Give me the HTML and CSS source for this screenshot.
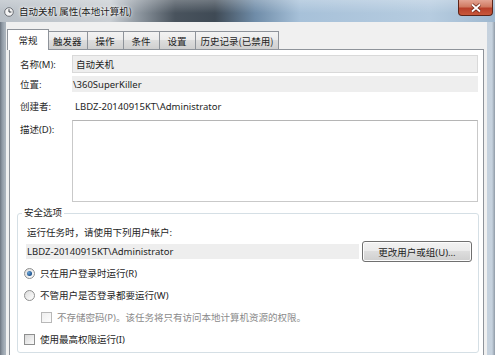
FILE: index.html
```html
<!DOCTYPE html>
<html lang="zh-CN">

<head>
    <meta charset="UTF-8">
    <title>自动关机 属性(本地计算机)</title>
    <link rel="stylesheet" href="styles.css">
</head>

<body>
    <div class="window">
        <div class="titlebar">
            <svg class="app-icon" width="10" height="10" viewBox="0 0 10 10">
                <circle cx="5" cy="5" r="4.3" fill="#f4f4f4" stroke="#6b6f75" stroke-width="1"/>
                <path d="M5 2.2V5H7.4" fill="none" stroke="#33383e" stroke-width="1"/>
            </svg>
            <span class="title">自动关机 属性(本地计算机)</span>
            <div class="close-btn">
                <svg width="12" height="10" viewBox="0 0 12 10">
                    <path d="M2 1.5L10 8.5M10 1.5L2 8.5" stroke="#6b2416" stroke-width="3.4"/>
                    <path d="M2 1.5L10 8.5M10 1.5L2 8.5" stroke="#ffffff" stroke-width="1.8"/>
                </svg>
            </div>
        </div>

        <div class="client">
            <div class="tabs">
                <div class="tab tab-active">常规</div>
                <div class="tab">触发器</div>
                <div class="tab">操作</div>
                <div class="tab">条件</div>
                <div class="tab">设置</div>
                <div class="tab">历史记录(已禁用)</div>
            </div>

            <div class="panel">
                <div class="info-grid">
                    <div class="label">名称(M):</div>
                    <div class="field field-box">自动关机</div>
                    <div class="label">位置:</div>
                    <div class="field field-fill">\360SuperKiller</div>
                    <div class="label">创建者:</div>
                    <div class="field field-text">LBDZ-20140915KT\Administrator</div>
                    <div class="label label-top">描述(D):</div>
                    <div class="memo"></div>
                </div>

                <fieldset class="group">
                    <legend>安全选项</legend>
                    <div class="hint">运行任务时，请使用下列用户帐户:</div>
                    <div class="account-row">
                        <div class="account">LBDZ-20140915KT\Administrator</div>
                        <button class="btn">更改用户或组(U)...</button>
                    </div>
                    <div class="options">
                        <div class="option"><span class="radio radio-on"></span>只在用户登录时运行(R)</div>
                        <div class="option"><span class="radio"></span>不管用户是否登录都要运行(W)</div>
                        <div class="option option-sub option-disabled"><span class="check"></span>不存储密码(P)。该任务将只有访问本地计算机资源的权限。</div>
                        <div class="option"><span class="check"></span>使用最高权限运行(I)</div>
                    </div>
                </fieldset>
            </div>
        </div>
    </div>
</body>

</html>
```

FILE: styles.css
```css
body {
    margin: 0;
    font-family: "Noto Sans", "Noto Sans CJK SC", sans-serif;
    font-size: 9.5px;
    color: #1e1e1e;
    overflow: hidden;
}

.window {
    width: 495px;
    height: 355px;
    display: flex;
    flex-direction: column;
    background: linear-gradient(to right, #6c7580 0, #8e98a3 2px, #aab3bc 5px, #b9c2cb 50%, #c6d2de calc(100% - 3px), #8f9aa6 100%);
}

.titlebar {
    height: 22px;
    display: flex;
    align-items: center;
    background:
        linear-gradient(to bottom, rgba(255, 255, 255, 0.25), rgba(255, 255, 255, 0) 60%),
        linear-gradient(to right, #b9c0c7 0, #c9ced3 110px, #8b949d 140px, #49535d 175px, #3f4a55 215px, #6f8ca8 255px, #a7c1d9 300px, #b6cce0 430px, #9fb8cf 100%);
}

.app-icon {
    margin-left: 4px;
    margin-top: 1px;
}

.title {
    margin-left: 5px;
    color: #1b1b1b;
    font-family: "Noto Sans CJK SC", sans-serif;
    text-shadow: 0 0 4px #ffffff, 0 0 2px #ffffff;
}

.close-btn {
    align-self: flex-start;
    margin-left: auto;
    margin-right: 2px;
    width: 35px;
    height: 16px;
    display: flex;
    align-items: center;
    justify-content: center;
    border: 1px solid #5d2418;
    border-top: none;
    border-radius: 0 0 4px 4px;
    box-sizing: border-box;
    background: linear-gradient(to bottom, #e3a493 0, #d07a62 45%, #b8402a 55%, #c9583b 100%);
}

.client {
    flex: 1;
    margin: 0 8px 0 6px;
    padding: 7px 3px 0 3px;
    background: #f0f0f0;
    display: flex;
    flex-direction: column;
}

.tabs {
    display: flex;
    align-items: flex-end;
    height: 20px;
    position: relative;
    z-index: 1;
}

.tab {
    height: 18px;
    min-width: 37px;
    padding: 0 5px;
    box-sizing: border-box;
    display: flex;
    align-items: center;
    justify-content: center;
    border: 1px solid #8e939a;
    border-bottom: none;
    margin-left: -1px;
    background: linear-gradient(to bottom, #f3f3f3 0, #ebebeb 45%, #dddddd 50%, #cfcfcf 100%);
    font-family: "Noto Sans CJK SC", sans-serif;
}

.tab-active {
    height: 21px;
    margin: 0 -2px -1px -2px;
    min-width: 42px;
    background: #ffffff;
    position: relative;
    z-index: 2;
}

.tab-active + .tab {
    margin-left: 0;
}

.panel {
    flex: 1;
    border: 1px solid #8e939a;
    border-bottom: none;
    background: #ffffff;
    padding: 5px 5px 0 10px;
}

.info-grid {
    display: grid;
    grid-template-columns: 52px 1fr;
    grid-template-rows: 18px 16px 22px 82px;
    row-gap: 3px;
}

.label {
    display: flex;
    align-items: center;
    color: #2a2a2a;
}

.label-top {
    align-items: flex-start;
    padding-top: 2px;
}

.field {
    display: flex;
    align-items: center;
    padding-left: 2px;
}

.field-box {
    background: #eeeeee;
    border: 1px solid #d9d9d9;
    padding-left: 3px;
}

.field-fill {
    background: #eeeeee;
    padding-left: 1px;
}

.field-text {
    padding-left: 3px;
}

.memo {
    border: 1px solid #c9c9c9;
    border-top-color: #b5b5b5;
    background: #ffffff;
}

.group {
    margin: 4px 0 0 -3px;
    padding: 6px 6px 5px 6px;
    border: 1px solid #d5dfe5;
    border-radius: 3px;
}

.group legend {
    padding: 0 2px;
    margin-left: -2px;
    line-height: 14px;
}

.hint {
    line-height: 14px;
    margin-left: 3px;
}

.account-row {
    display: flex;
    align-items: center;
    margin-top: 1px;
}

.account {
    width: 333px;
    height: 15px;
    margin-left: 2px;
    padding-left: 1px;
    box-sizing: border-box;
    display: flex;
    align-items: center;
    background: #eeeeee;
}

.btn {
    margin-left: 3px;
    width: 110px;
    height: 21px;
    border: 1px solid #707070;
    border-radius: 3px;
    background: linear-gradient(to bottom, #f2f2f2 0, #ebebeb 45%, #dddddd 50%, #cfcfcf 100%);
    box-shadow: inset 0 0 0 1px #fcfcfc;
    font: inherit;
    color: #1e1e1e;
    padding: 0;
}

.options {
    display: flex;
    flex-direction: column;
    gap: 6px;
    margin-top: 3px;
}

.option {
    height: 16px;
    display: flex;
    align-items: center;
}

.option-sub {
    margin-left: 17px;
}

.option-disabled {
    color: #8a8a8a;
}

.radio {
    width: 11px;
    height: 11px;
    border-radius: 50%;
    border: 1px solid #8e8f8f;
    box-sizing: border-box;
    margin-right: 5px;
    background: linear-gradient(135deg, #dcdcdc, #ffffff);
    display: flex;
    align-items: center;
    justify-content: center;
}

.radio-on::after {
    content: "";
    width: 5px;
    height: 5px;
    border-radius: 50%;
    background: radial-gradient(circle at 35% 35%, #6aa6d9, #1b4f8a 70%);
}

.check {
    width: 11px;
    height: 11px;
    border: 1px solid #8e8f8f;
    box-sizing: border-box;
    margin-right: 5px;
    background: linear-gradient(135deg, #d8d8d8, #fbfbfb);
}

.option-disabled .check {
    border-color: #b8b8b8;
    background: linear-gradient(135deg, #eeeeee, #fdfdfd);
}
```
